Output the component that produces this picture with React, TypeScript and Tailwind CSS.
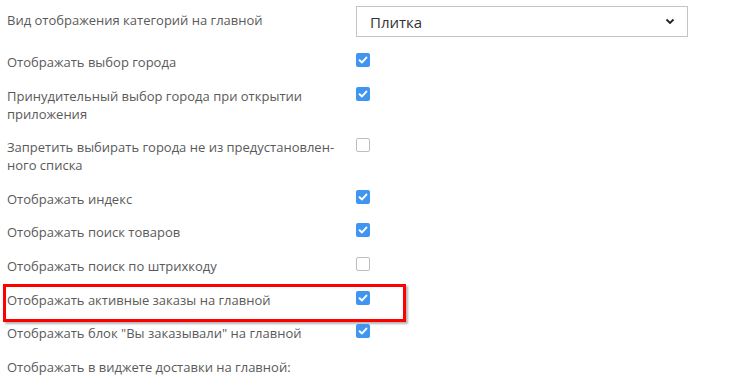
const rows: { label: React.ReactNode; checked: boolean; highlight?: boolean; noBox?: boolean }[] = [
  { label: 'Отображать выбор города', checked: true },
  { label: 'Принудительный выбор города при открытии приложения', checked: true },
  {
    label: (
      <>
        Запретить выбирать города не из предустановлен-
        <br />
        ного списка
      </>
    ),
    checked: false,
  },
  { label: 'Отображать индекс', checked: true },
  { label: 'Отображать поиск товаров', checked: true },
  { label: 'Отображать поиск по штрихкоду', checked: false },
  { label: 'Отображать активные заказы на главной', checked: true, highlight: true },
  { label: 'Отображать блок "Вы заказывали" на главной', checked: true },
  { label: 'Отображать в виджете доставки на главной:', checked: false, noBox: true },
]

function Checkbox({ checked }: { checked: boolean }) {
  if (!checked)
    return <div className="size-[14px] rounded-[2px] border border-[#bdbdbd] bg-white" />
  return (
    <div className="flex size-[14px] items-center justify-center rounded-[2px] bg-[#3f95f0]">
      <svg width="10" height="10" viewBox="0 0 10 10">
        <path d="M1.6 5.2 L4 7.4 L8.4 2.6" fill="none" stroke="white" strokeWidth="2" strokeLinecap="round" strokeLinejoin="round" />
      </svg>
    </div>
  )
}

export default function App() {
  return (
    <div
      className="h-[386px] w-[740px] overflow-hidden bg-white pl-[7px] pt-[6px] text-[13px] leading-[18px] text-[#5a5a5a]"
      style={{ fontFamily: '"Open Sans", "Noto Sans", sans-serif' }}
    >
      <div className="flex items-center">
        <div className="w-[349px] pb-[3px]">Вид отображения категорий на главной</div>
        <div className="flex h-[31px] w-[332px] items-center justify-between border border-[#c4c4c4] pl-[13px] pr-[12px] text-[15px] text-[#333]">
          <span>Плитка</span>
          <svg width="10" height="7" viewBox="0 0 10 7">
            <path d="M1.5 1.5 L5 5 L8.5 1.5" fill="none" stroke="#222" strokeWidth="1.8" />
          </svg>
        </div>
      </div>
      <div className="mt-[16px] flex flex-col gap-[15.6px]">
        {rows.map((row, i) => (
          <div key={i} className="relative flex">
            {row.highlight && (
              <div className="absolute left-[-4px] top-[-7px] h-[38px] w-[403px] border-[3px] border-[#ff0000] shadow-[2px_2px_2px_rgba(0,0,0,0.3)]" />
            )}
            <div className="w-[349px] pr-[10px]">{row.label}</div>
            {!row.noBox && <Checkbox checked={row.checked} />}
          </div>
        ))}
      </div>
    </div>
  )
}
